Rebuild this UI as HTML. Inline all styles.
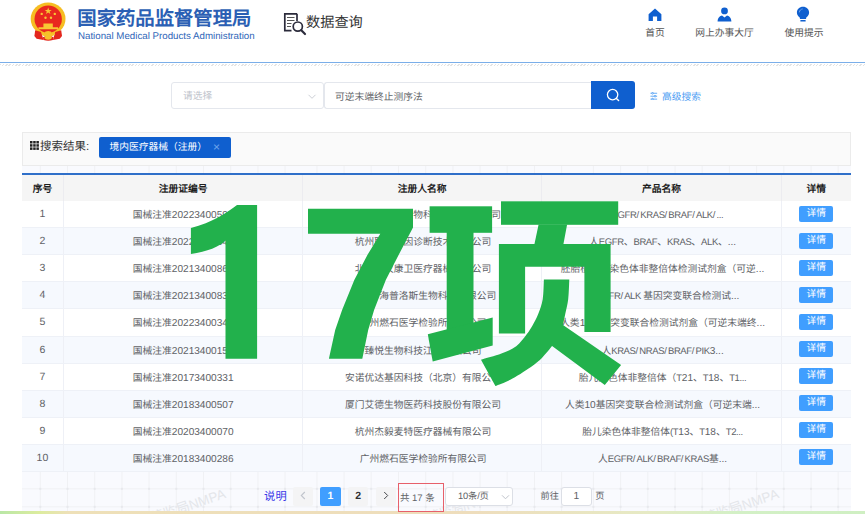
<!DOCTYPE html>
<html lang="zh-CN">
<head>
<meta charset="utf-8">
<title>国家药品监督管理局 数据查询</title>
<style>
*{margin:0;padding:0;box-sizing:border-box}
html,body{width:865px;height:514px;overflow:hidden;background:#fff}
body{position:relative;font-family:"Liberation Sans",sans-serif;font-size:9.75px;color:#606266;text-rendering:geometricPrecision}
.l{font-size:10.1px}
.u{font-size:9.5px;letter-spacing:-0.38px}
.u i{font-style:normal;letter-spacing:1.1px}
td:nth-child(3),td:nth-child(4){padding-left:2px}
.abs{position:absolute;white-space:nowrap}
/* header */
#title{left:77.3px;top:5.5px;font-size:19.35px;font-weight:bold;color:#2b5fb4;line-height:26px;letter-spacing:0}
#subtitle{left:78px;top:30px;font-size:9.72px;color:#2f66b8;line-height:14px}
#dq{left:306px;top:12px;font-size:14.2px;color:#333;line-height:22px}
.nav{font-size:9.75px;color:#555;line-height:12px;text-align:center;width:80px}
#hline{left:0;top:61.5px;width:865px;height:1.5px;background:#7aaee9}
#hatch{left:0;top:64px;width:865px;height:2px;background:repeating-linear-gradient(135deg,#e4e4e4 0 1px,#fff 1px 2.35px)}
/* search */
#sel{left:171px;top:82px;width:153px;height:27px;border:1px solid #e4e7ed;border-radius:3px;background:#fff}
#sel span{position:absolute;left:11px;top:1px;line-height:26px;font-size:9.75px;color:#c0c4cc}
#inp{left:324px;top:82px;width:268px;height:27px;border:1px solid #e4e7ed;border-right:none;border-radius:3px 0 0 3px;background:#fff}
#inp span{position:absolute;left:10px;top:1.8px;line-height:25px;font-size:9.75px;color:#63666a}
#sbtn{left:591px;top:81px;width:44px;height:28px;background:#0f5fcf;border-radius:0 3px 3px 0}
#adv{left:662px;top:91px;font-size:9.75px;color:#4a9cf3;line-height:13px}
/* panel */
#panel{left:21.6px;top:131.7px;width:829.6px;height:379.5px;background-color:#f9fafe;overflow:hidden}
#tagrow{left:0;top:0;width:829px;height:34px;background:#fafafa;border:1px solid #ebebeb}
#srlabel{left:17.3px;top:6.8px;font-size:11.5px;color:#333;line-height:16px}
#tag{left:76px;top:4.3px;width:132px;height:21px;background:#0f5fcf;border-radius:2px;color:#fff;font-size:9.75px;line-height:22.4px}
#tag span.t{position:absolute;left:11px;top:0}
#tag span.x{position:absolute;left:114.5px;top:-0.5px;color:#6fa6ee;font-size:12px}
#tline{left:0;top:41px;width:829px;height:2px;background:#2f6fc9}
table{position:absolute;left:0;top:43px;width:829px;border-collapse:collapse;table-layout:fixed;background:#fff}
th{height:26.1px;background:#f5f5f5;color:#1f1f1f;font-size:9.75px;font-weight:bold;border-right:1px solid #ececf0;padding:0;text-align:center}
td{height:27.06px;text-align:center;border-right:1px solid #eef0f6;border-bottom:1px solid #eef1f7;padding:0;white-space:nowrap;overflow:hidden;color:#606266;font-size:9.75px}
tr:nth-child(even) td{background:#f6f9fe}
td:last-child,th:last-child{border-right:none}
td.n{font-size:10.5px}
.d{position:relative;top:-0.3px;display:inline-block;width:34px;height:16px;background:#409eff;border-radius:2px;color:#fff;line-height:15.5px;font-size:9.75px;vertical-align:middle}
/* pagination */
.pg{top:355.5px;height:19px;line-height:19px;text-align:center;border-radius:2px;font-size:10.5px}
.pb{background:#f4f4f5;color:#303133;font-weight:bold;width:20.5px}
#strip{left:0;top:511.2px;width:865px;height:2.8px;background:linear-gradient(to right,#b9e7a6 0%,#dcec9e 4.5%,#eee0b8 8%,#eeddbc 55%,#e6eac4 75%,#d3f0c6 85%,#cfefc2 100%)}
</style>
</head>
<body>

<!-- emblem -->
<svg class="abs" style="left:29px;top:0.5px" width="40" height="42" viewBox="0 0 40 42">
  <ellipse cx="19.1" cy="17.9" rx="17.4" ry="16.4" fill="#f6bd22"/>
  <circle cx="19.2" cy="18.1" r="13.7" fill="#e9281f"/>
  <path d="M9.5 28.2 H29 V26.2 H23.8 V22.6 H14.4 V26.2 H9.5 Z" fill="#f8c634"/>
  <polygon points="19.2,6.4 20.1,8.9 22.7,8.9 20.6,10.5 21.4,13 19.2,11.5 17,13 17.8,10.5 15.7,8.9 18.3,8.9" fill="#f8c634"/>
  <circle cx="12.7" cy="12.9" r="1.2" fill="#f8c634"/><circle cx="25.8" cy="12.9" r="1.2" fill="#f8c634"/>
  <circle cx="16.5" cy="16.8" r="1.2" fill="#f8c634"/><circle cx="22" cy="16.8" r="1.2" fill="#f8c634"/>
  <path d="M6.2 29.3 L12.2 31 L14.5 38.9 L7.6 37.8 L5.4 35 Z" fill="#e3261d"/>
  <path d="M32.2 29.3 L26.2 31 L23.9 38.9 L30.8 37.8 L33 35 Z" fill="#e3261d"/>
  <path d="M12.2 31 Q19.2 35.4 26.2 31 L25.2 34.2 Q19.2 37.6 13.2 34.2 Z" fill="#f6c12a"/>
  <path d="M13.8 36.2 Q19.2 33.6 24.6 36.2 L23.9 38.9 Q19.2 40.4 14.5 38.9 Z" fill="#e3261d"/>
  <ellipse cx="19.2" cy="36.6" rx="3.6" ry="2.1" fill="#f6c12a"/>
  <ellipse cx="19.2" cy="31.6" rx="3.2" ry="1.5" fill="#f6c12a"/>
</svg>
<div id="title" class="abs">国家药品监督管理局</div>
<div id="subtitle" class="abs">National Medical Products Administration</div>

<!-- data query -->
<svg class="abs" style="left:283px;top:12px" width="25" height="24" viewBox="0 0 25 24" fill="none" stroke="#2b2b3b">
  <path d="M14 1.8 H1.8 V18.6 H8.5" stroke-width="1.7"/>
  <path d="M14 1.8 V9" stroke-width="1.7"/>
  <path d="M4 5.5 H11.5 M4 8.5 H11.5 M4 11.5 H8.5 M4 14.5 H8" stroke-width="1.1" stroke="#555"/>
  <circle cx="14.8" cy="14.6" r="4.6" stroke-width="1.7"/>
  <path d="M18.3 18.3 L22 22" stroke-width="2.2" stroke-linecap="round"/>
</svg>
<div id="dq" class="abs">数据查询</div>

<!-- nav -->
<svg class="abs" style="left:648px;top:8px" width="14" height="14" viewBox="0 0 14 14"><path d="M7 0.6 L0.6 6.2 V12.9 H4.9 V8.6 H9.1 V12.9 H13.4 V6.2 Z" fill="#0f5fcf"/></svg>
<div class="abs nav" style="left:615px;top:28px">首页</div>
<svg class="abs" style="left:717px;top:7px" width="15" height="15" viewBox="0 0 15 15"><circle cx="7.5" cy="3.9" r="3.4" fill="#0f5fcf"/><path d="M0.6 14.6 C0.6 10.6 3.2 8.6 5 8.4 L7.5 10.6 L10 8.4 C11.8 8.6 14.4 10.6 14.4 14.6 Z" fill="#0f5fcf"/></svg>
<div class="abs nav" style="left:684.5px;top:28px">网上办事大厅</div>
<svg class="abs" style="left:796px;top:6px" width="14" height="17" viewBox="0 0 14 17"><path d="M7 0.8 C3.4 0.8 0.9 3.4 0.9 6.6 C0.9 9 2.4 10.6 3.9 11.8 V13 H10.1 V11.8 C11.6 10.6 13.1 9 13.1 6.6 C13.1 3.4 10.6 0.8 7 0.8 Z" fill="#0f5fcf"/><rect x="4.3" y="14" width="5.4" height="1.6" rx="0.6" fill="#0f5fcf"/><path d="M3.4 6 C3.6 4.3 4.8 3.2 6.3 3" stroke="#6ea2ea" stroke-width="1" fill="none" stroke-linecap="round"/></svg>
<div class="abs nav" style="left:764px;top:28px">使用提示</div>

<div id="hline" class="abs"></div>
<div id="hatch" class="abs"></div>

<!-- search -->
<div id="sel" class="abs"><span>请选择</span>
  <svg style="position:absolute;left:135px;top:10px" width="10" height="8" viewBox="0 0 10 8"><path d="M1.5 1.8 L5 5.3 L8.5 1.8" fill="none" stroke="#c6cad1" stroke-width="0.9"/></svg>
</div>
<div id="inp" class="abs"><span>可逆末端终止测序法</span></div>
<div id="sbtn" class="abs">
  <svg style="position:absolute;left:14px;top:6px" width="16" height="16" viewBox="0 0 16 16"><circle cx="7.6" cy="7.6" r="5.2" fill="none" stroke="#fff" stroke-width="1.3"/><path d="M11.4 11.4 L13.6 13.6" stroke="#fff" stroke-width="1.4" stroke-linecap="round"/></svg>
</div>
<svg class="abs" style="left:650px;top:92px" width="7.6" height="8.4" viewBox="0 0 9 10" stroke="#4a9cf3" fill="none" stroke-width="1"><path d="M0.5 1.5 H8.5 M0.5 5 H8.5 M0.5 8.5 H8.5"/><circle cx="3" cy="1.5" r="1" fill="#fff"/><circle cx="6" cy="5" r="1" fill="#fff"/><circle cx="3" cy="8.5" r="1" fill="#fff"/></svg>
<div id="adv" class="abs">高级搜索</div>

<!-- panel -->
<div id="panel" class="abs">
  <svg class="abs" style="left:0;top:0" width="829.6" height="380" viewBox="0 0 829.6 380"><path d="M18.3 0V380M45.5 0V380M72.7 0V380M99.9 0V380M127.1 0V380M154.3 0V380M181.5 0V380M208.7 0V380M235.9 0V380M263.1 0V380M294.9 0V380M322.0 0V380M349.2 0V380M376.5 0V380M403.7 0V380M430.9 0V380M458.0 0V380M485.2 0V380M512.5 0V380M539.6 0V380M571.4 0V380M598.6 0V380M625.8 0V380M653.0 0V380M680.2 0V380M707.4 0V380M734.6 0V380M761.8 0V380M789.0 0V380M816.2 0V380M0 356.8H829.6M0 374.8H829.6" stroke="#f0f1f4" stroke-width="1" fill="none"/><g fill="#e7e8ed"><rect x="17.3" y="355.8" width="2" height="2"/><rect x="17.3" y="373.8" width="2" height="2"/><rect x="44.5" y="355.8" width="2" height="2"/><rect x="44.5" y="373.8" width="2" height="2"/><rect x="71.7" y="355.8" width="2" height="2"/><rect x="71.7" y="373.8" width="2" height="2"/><rect x="98.9" y="355.8" width="2" height="2"/><rect x="98.9" y="373.8" width="2" height="2"/><rect x="126.1" y="355.8" width="2" height="2"/><rect x="126.1" y="373.8" width="2" height="2"/><rect x="153.3" y="355.8" width="2" height="2"/><rect x="153.3" y="373.8" width="2" height="2"/><rect x="180.5" y="355.8" width="2" height="2"/><rect x="180.5" y="373.8" width="2" height="2"/><rect x="207.7" y="355.8" width="2" height="2"/><rect x="207.7" y="373.8" width="2" height="2"/><rect x="234.9" y="355.8" width="2" height="2"/><rect x="234.9" y="373.8" width="2" height="2"/><rect x="262.1" y="355.8" width="2" height="2"/><rect x="262.1" y="373.8" width="2" height="2"/><rect x="293.9" y="355.8" width="2" height="2"/><rect x="293.9" y="373.8" width="2" height="2"/><rect x="321.0" y="355.8" width="2" height="2"/><rect x="321.0" y="373.8" width="2" height="2"/><rect x="348.2" y="355.8" width="2" height="2"/><rect x="348.2" y="373.8" width="2" height="2"/><rect x="375.5" y="355.8" width="2" height="2"/><rect x="375.5" y="373.8" width="2" height="2"/><rect x="402.7" y="355.8" width="2" height="2"/><rect x="402.7" y="373.8" width="2" height="2"/><rect x="429.9" y="355.8" width="2" height="2"/><rect x="429.9" y="373.8" width="2" height="2"/><rect x="457.0" y="355.8" width="2" height="2"/><rect x="457.0" y="373.8" width="2" height="2"/><rect x="484.2" y="355.8" width="2" height="2"/><rect x="484.2" y="373.8" width="2" height="2"/><rect x="511.5" y="355.8" width="2" height="2"/><rect x="511.5" y="373.8" width="2" height="2"/><rect x="538.6" y="355.8" width="2" height="2"/><rect x="538.6" y="373.8" width="2" height="2"/><rect x="570.4" y="355.8" width="2" height="2"/><rect x="570.4" y="373.8" width="2" height="2"/><rect x="597.6" y="355.8" width="2" height="2"/><rect x="597.6" y="373.8" width="2" height="2"/><rect x="624.8" y="355.8" width="2" height="2"/><rect x="624.8" y="373.8" width="2" height="2"/><rect x="652.0" y="355.8" width="2" height="2"/><rect x="652.0" y="373.8" width="2" height="2"/><rect x="679.2" y="355.8" width="2" height="2"/><rect x="679.2" y="373.8" width="2" height="2"/><rect x="706.4" y="355.8" width="2" height="2"/><rect x="706.4" y="373.8" width="2" height="2"/><rect x="733.6" y="355.8" width="2" height="2"/><rect x="733.6" y="373.8" width="2" height="2"/><rect x="760.8" y="355.8" width="2" height="2"/><rect x="760.8" y="373.8" width="2" height="2"/><rect x="788.0" y="355.8" width="2" height="2"/><rect x="788.0" y="373.8" width="2" height="2"/><rect x="815.2" y="355.8" width="2" height="2"/><rect x="815.2" y="373.8" width="2" height="2"/></g><text x="204.6" y="365.5" text-anchor="end" transform="rotate(-19 204.6 365.5)" font-size="13.5" fill="#e4e6ea" font-family="Liberation Sans, sans-serif">国家药监局NMPA</text><text x="481.1" y="365.5" text-anchor="end" transform="rotate(-19 481.1 365.5)" font-size="13.5" fill="#e4e6ea" font-family="Liberation Sans, sans-serif">国家药监局NMPA</text><text x="757.7" y="365.5" text-anchor="end" transform="rotate(-19 757.7 365.5)" font-size="13.5" fill="#e4e6ea" font-family="Liberation Sans, sans-serif">国家药监局NMPA</text></svg>
  <div id="tagrow" class="abs">
    <svg class="abs" style="left:7.3px;top:8.2px" width="9" height="9" viewBox="0 0 9 9" fill="#222"><rect x="0" y="0" width="2.5" height="2.5"/><rect x="3.2" y="0" width="2.5" height="2.5"/><rect x="6.4" y="0" width="2.5" height="2.5"/><rect x="0" y="3.2" width="2.5" height="2.5"/><rect x="3.2" y="3.2" width="2.5" height="2.5"/><rect x="6.4" y="3.2" width="2.5" height="2.5"/><rect x="0" y="6.4" width="2.5" height="2.5"/><rect x="3.2" y="6.4" width="2.5" height="2.5"/><rect x="6.4" y="6.4" width="2.5" height="2.5"/></svg>
    <div id="srlabel" class="abs">搜索结果:</div>
    <div id="tag" class="abs"><span class="t">境内医疗器械（注册）</span><span class="x">×</span></div>
  </div>
  <div id="tline" class="abs"></div>
  <table>
    <colgroup><col style="width:42.2px"><col style="width:238.8px"><col style="width:239px"><col style="width:240px"><col style="width:69px"></colgroup>
    <thead><tr><th>序号</th><th>注册证编号</th><th>注册人名称</th><th>产品名称</th><th>详情</th></tr></thead>
    <tbody>
      <tr><td class="n">1</td><td>国械注准<span class="l">20223400597</span></td><td>天津诺禾致源生物科技股份有限公司</td><td>人<span class="u">EGFR<i>/</i>KRAS<i>/</i>BRAF<i>/</i>ALK<i>/</i>...</span></td><td><span class="d">详情</span></td></tr>
      <tr><td class="n">2</td><td>国械注准<span class="l">20223400344</span></td><td>杭州联川基因诊断技术有限公司</td><td>人<span class="u">EGFR</span>、<span class="u">BRAF</span>、<span class="u">KRAS</span>、<span class="u">ALK</span>、<span class="l">...</span></td><td><span class="d">详情</span></td></tr>
      <tr><td class="n">3</td><td>国械注准<span class="l">20213400868</span></td><td>北京中仪康卫医疗器械有限公司</td><td>胚胎植入前染色体非整倍体检测试剂盒（可逆<span class="l">...</span></td><td><span class="d">详情</span></td></tr>
      <tr><td class="n">4</td><td>国械注准<span class="l">20213400833</span></td><td>深圳市海普洛斯生物科技有限公司</td><td>人<span class="u">EGFR<i>/</i>ALK </span>基因突变联合检测试<span class="l">...</span></td><td><span class="d">详情</span></td></tr>
      <tr><td class="n">5</td><td>国械注准<span class="l">20223400343</span></td><td>广州燃石医学检验所有限公司</td><td>人类<span class="l">10</span>基因突变联合检测试剂盒（可逆末端终<span class="l">...</span></td><td><span class="d">详情</span></td></tr>
      <tr><td class="n">6</td><td>国械注准<span class="l">20213400151</span></td><td>臻悦生物科技江苏有限公司</td><td>人<span class="u">KRAS<i>/</i>NRAS<i>/</i>BRAF<i>/</i>PIK</span><span class="l">3...</span></td><td><span class="d">详情</span></td></tr>
      <tr><td class="n">7</td><td>国械注准<span class="l">20173400331</span></td><td>安诺优达基因科技（北京）有限公司</td><td>胎儿染色体非整倍体（<span class="u">T</span><span class="l">21</span>、<span class="u">T</span><span class="l">18</span>、<span class="u">T1...</span></td><td><span class="d">详情</span></td></tr>
      <tr><td class="n">8</td><td>国械注准<span class="l">20183400507</span></td><td>厦门艾德生物医药科技股份有限公司</td><td>人类<span class="l">10</span>基因突变联合检测试剂盒（可逆末端<span class="l">...</span></td><td><span class="d">详情</span></td></tr>
      <tr><td class="n">9</td><td>国械注准<span class="l">20203400070</span></td><td>杭州杰毅麦特医疗器械有限公司</td><td>胎儿染色体非整倍体<span class="u">(T</span><span class="l">13</span>、<span class="u">T</span><span class="l">18</span>、<span class="u">T2...</span></td><td><span class="d">详情</span></td></tr>
      <tr><td class="n">10</td><td>国械注准<span class="l">20183400286</span></td><td>广州燃石医学检验所有限公司</td><td>人<span class="u">EGFR<i>/</i>ALK<i>/</i>BRAF<i>/</i>KRAS</span>基<span class="l">...</span></td><td><span class="d">详情</span></td></tr>
    </tbody>
  </table>

  <!-- pagination -->
  <div class="abs" style="left:242.5px;top:356.3px;line-height:19px;font-size:11.3px;color:#3b3be8">说明</div>
  <div class="abs pg pb" style="left:271px;color:#c0c4cc"><svg width="6" height="9" viewBox="0 0 6 9" style="vertical-align:-1px"><path d="M4.8 1 L1.3 4.5 L4.8 8" fill="none" stroke="#c0c4cc" stroke-width="1.1"/></svg></div>
  <div class="abs pg pb" style="left:298.5px;background:#409eff;color:#fff">1</div>
  <div class="abs pg pb" style="left:326.3px">2</div>
  <div class="abs pg pb" style="left:354px"><svg width="6" height="9" viewBox="0 0 6 9" style="vertical-align:-1px"><path d="M1.2 1 L4.7 4.5 L1.2 8" fill="none" stroke="#45474b" stroke-width="1"/></svg></div>
  <div class="abs" style="left:378.3px;top:357px;line-height:19px;font-size:9.5px;color:#606266">共 17 条</div>
  <div class="abs pg" style="left:423px;width:68px;background:#fff;border:1px solid #dcdfe6;border-radius:3px;line-height:17px;text-align:left;padding-left:12.5px;color:#606266;font-size:9.3px;letter-spacing:-0.2px">10条/页
    <svg style="position:absolute;left:55px;top:6px" width="9" height="7" viewBox="0 0 9 7"><path d="M1 1.3 L4.5 4.8 L8 1.3" fill="none" stroke="#c0c4cc" stroke-width="1"/></svg>
  </div>
  <div class="abs" style="left:519px;top:355.8px;line-height:19px;font-size:9.2px;color:#606266">前往</div>
  <div class="abs pg" style="left:539.3px;width:31.2px;background:#fff;border:1px solid #dcdfe6;border-radius:3px;line-height:17px;color:#606266;font-size:10.3px">1</div>
  <div class="abs" style="left:573.6px;top:355.8px;line-height:19px;font-size:9.2px;color:#606266">页</div>
</div>

<!-- big green overlay -->
<svg class="abs" style="left:0;top:0" width="865" height="514" viewBox="0 0 865 514" fill="#22b14c">
  <!-- 1 -->
  <path d="M237 205.1 L257.1 205.1 L257.1 358.7 L225.5 358.7 L225.5 240.6 C220 246.5 207 252 190.9 254.1 L190.9 228 C212 223 228 212 237 205.1 Z"/>
  <!-- 7 -->
  <path d="M308 208.7 L413 208.7 L413 227.4 L398.6 255 L385.8 280 L374.1 310 L368.2 330 L362.3 358.7 L328.9 358.7 L335.2 330 L342.1 310 L354.3 280 L367.4 255 L380.3 233.8 L308 233.8 Z"/>
  <!-- 项: 工 -->
  <rect x="429.6" y="206.3" width="62.5" height="26.5"/>
  <rect x="446.7" y="232" width="26.8" height="98"/>
  <polygon points="427.8,334.2 492.7,317.6 492.7,345.4 432.7,361.6"/>
  <!-- 项: 页 -->
  <rect x="501" y="201.3" width="117.2" height="23.5"/>
  <polygon points="538.6,224.5 567.1,224.5 563.4,244.2 534.4,244.2"/>
  <path d="M498.9 243.9 H610.6 V331.9 H584.4 V266.8 H525.1 V333.5 H498.9 Z"/>
  <path d="M543.9 279.5L569.3 279.5C569.1 282.8 568.9 293.5 568.2 299.2C567.5 304.9 566.2 309.5 565.3 313.8C564.4 318.1 563.4 323.2 563.0 325.1L621.1 365.1L604.8 385.1L552.1 346.1C550.5 347.9 546.0 353.8 542.8 357.0C539.6 360.2 538.0 361.9 533.0 365.5C528.0 369.1 518.8 375.2 512.5 378.6C506.2 382.0 498.2 384.8 495.4 386.0L481 359.7C484.4 358.7 495.5 355.9 501.4 353.6C507.3 351.4 512.0 349.4 516.2 346.2C520.4 343.0 524.0 337.7 526.7 334.2C529.4 330.7 530.6 328.8 532.5 325.4C534.4 322.0 536.6 318.2 538.3 313.8C540.0 309.4 541.8 304.9 542.7 299.2C543.6 293.5 543.7 282.8 543.9 279.5Z"/>
</svg>

<div id="strip" class="abs"></div>
<div class="abs" style="left:397.9px;top:483.3px;width:45.9px;height:28.8px;border:1px solid #e7606a"></div>
</body>
</html>
